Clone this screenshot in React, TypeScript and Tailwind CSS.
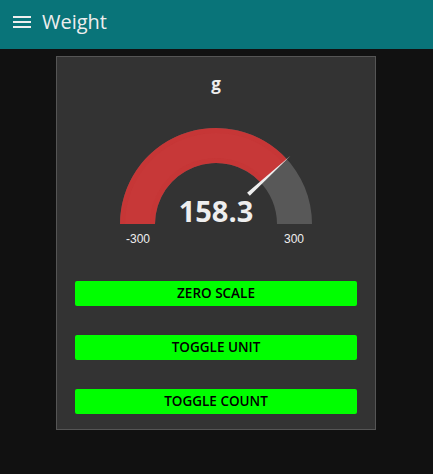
import React from "react";

const cx = 216 - 57;
const cy = 167;

const pt = (r: number, deg: number) => {
  const a = (deg * Math.PI) / 180;
  return [cx - r * Math.cos(a), cy - r * Math.sin(a)];
};

const arc = (r1: number, r2: number, from: number, to: number) => {
  const [x1, y1] = pt(r2, from);
  const [x2, y2] = pt(r2, to);
  const [x3, y3] = pt(r1, to);
  const [x4, y4] = pt(r1, from);
  return `M${x1} ${y1} A${r2} ${r2} 0 0 1 ${x2} ${y2} L${x3} ${y3} A${r1} ${r1} 0 0 0 ${x4} ${y4} Z`;
};

const Gauge = () => {
  const value = 158.3;
  const angle = ((value + 300) / 600) * 180;
  const [tx, ty] = pt(101, angle);
  const [bx, by] = pt(44, angle);
  const nx = Math.sin((angle * Math.PI) / 180) * 2;
  const ny = -Math.cos((angle * Math.PI) / 180) * 2;

  return (
    <svg width="318" height="200" viewBox="0 0 318 200" className="block">
      <text x={cx} y="33" textAnchor="middle" fill="#eeeeee" fontSize="17" fontWeight="700" fontFamily="'Open Sans', sans-serif">
        g
      </text>
      <path d={arc(61, 96, 0, 180)} fill="#585858" />
      <path d={arc(61, 96, 0, angle)} fill="#c63636" />
      <path d={arc(66, 91, 0, angle)} fill="#c83a3a" opacity="0.5" />
      <polygon
        points={`${bx + nx},${by + ny} ${bx - nx},${by - ny} ${tx},${ty}`}
        fill="#eeeeee"
      />
      <text x={cx} y="165" textAnchor="middle" fill="#eeeeee" fontSize="29" fontWeight="700" fontFamily="'Open Sans', sans-serif">
        158.3
      </text>
      <text x={cx - 78} y="186" textAnchor="middle" fill="#eeeeee" fontSize="12" fontFamily="'Liberation Sans', sans-serif">
        -300
      </text>
      <text x={cx + 78} y="186" textAnchor="middle" fill="#eeeeee" fontSize="12" fontFamily="'Liberation Sans', sans-serif">
        300
      </text>
    </svg>
  );
};

const Button = ({ label }: { label: string }) => (
  <button className="h-[25px] w-[282px] rounded-[2px] bg-[#00ff00] text-[13.5px] font-semibold uppercase text-black">
    {label}
  </button>
);

export default function App() {
  return (
    <div className="h-[474px] w-[433px] bg-[#111111] font-['Open_Sans',sans-serif]">
      <header className="flex h-[49px] items-center bg-[#097479] px-[12px] pb-[6px]">
        <svg width="20" height="14" viewBox="0 0 20 14">
          <rect x="1" y="1" width="18" height="2" fill="#eeeeee" />
          <rect x="1" y="6" width="18" height="2" fill="#eeeeee" />
          <rect x="1" y="11" width="18" height="2" fill="#eeeeee" />
        </svg>
        <span className="ml-[10px] text-[20px] text-[#eeeeee]">Weight</span>
      </header>
      <div className="ml-[56px] mt-[7px] flex h-[374px] w-[320px] flex-col items-center border border-[#555555] bg-[#333333]">
        <Gauge />
        <div className="mt-[24px] flex flex-col gap-[29px]">
          <Button label="Zero scale" />
          <Button label="Toggle unit" />
          <Button label="Toggle count" />
        </div>
      </div>
    </div>
  );
}
